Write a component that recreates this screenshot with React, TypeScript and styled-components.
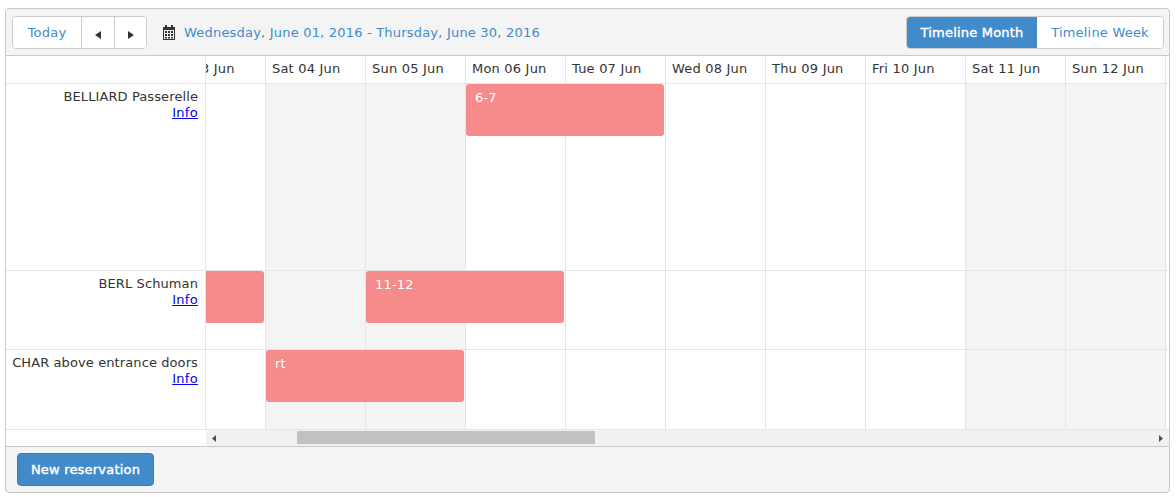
import React from 'react'
import styled, { createGlobalStyle } from 'styled-components'

const CELL_WIDTH = 100
const TRACK_START = -40 // the timeline is scrolled, so the first day is cut off on the left

interface Day {
  label: string
  weekend?: boolean
}

interface Reservation {
  title: string
  startDay: number
  days: number
}

interface Resource {
  name: string
  height: number
  reservations: Reservation[]
}

const days: Day[] = [
  { label: 'Fri 03 Jun' },
  { label: 'Sat 04 Jun', weekend: true },
  { label: 'Sun 05 Jun', weekend: true },
  { label: 'Mon 06 Jun' },
  { label: 'Tue 07 Jun' },
  { label: 'Wed 08 Jun' },
  { label: 'Thu 09 Jun' },
  { label: 'Fri 10 Jun' },
  { label: 'Sat 11 Jun', weekend: true },
  { label: 'Sun 12 Jun', weekend: true },
  { label: 'Mon 13 Jun' },
]

const resources: Resource[] = [
  { name: 'BELLIARD Passerelle', height: 187, reservations: [{ title: '6-7', startDay: 3, days: 2 }] },
  {
    name: 'BERL Schuman',
    height: 79,
    reservations: [
      { title: '', startDay: -1, days: 2 },
      { title: '11-12', startDay: 2, days: 2 },
    ],
  },
  { name: 'CHAR above entrance doors', height: 80, reservations: [{ title: 'rt', startDay: 1, days: 2 }] },
]

const GlobalStyle = createGlobalStyle`
  html, body {
    margin: 0;
    padding: 0;
    background: #fff;
  }
  body {
    font-family: "DejaVu Sans", Verdana, sans-serif;
    font-size: 13px;
    letter-spacing: 0.2px;
    color: #333;
  }
`

const Page = styled.div`
  padding: 8px 6px 0 5px;
`

const Scheduler = styled.div`
  border: 1px solid #c9c9c9;
  border-radius: 4px;
  background: #f4f4f4;
  overflow: hidden;
`

const Toolbar = styled.div`
  display: flex;
  align-items: center;
  justify-content: space-between;
  height: 46px;
  padding: 0 5px 0 6px;
  border-bottom: 1px solid #c9c9c9;
  box-sizing: content-box;
`

const ToolbarLeft = styled.div`
  display: flex;
  align-items: center;
`

const ButtonGroup = styled.div`
  display: flex;
  height: 33px;
  background: #fff;
  border: 1px solid #ccc;
  border-radius: 4px;
  box-sizing: border-box;
  overflow: hidden;
`

const ToolButton = styled.div<{ $width: number; $active?: boolean }>`
  display: flex;
  align-items: center;
  justify-content: center;
  box-sizing: border-box;
  width: ${(p) => p.$width}px;
  color: ${(p) => (p.$active ? '#fff' : '#428bca')};
  background: ${(p) => (p.$active ? '#428bca' : '#fff')};
  -webkit-text-stroke: ${(p) => (p.$active ? '0.4px' : '0')};
  border-left: 1px solid #ccc;
  &:first-child {
    border-left: none;
  }
`

const ArrowButton = styled(ToolButton)`
  padding-top: 5px;
`

const ViewButton = styled(ToolButton)`
  border-left: none;
`

const DateRange = styled.div`
  display: flex;
  align-items: center;
  margin-left: 16px;
  color: #428bca;
`

const CalendarIcon = styled.svg`
  width: 12px;
  height: 15px;
  margin-right: 9px;
  display: block;
`

const HeaderRow = styled.div`
  display: flex;
  height: 27px;
  background: #fff;
  border-bottom: 1px solid #e5e5e5;
`

const Corner = styled.div`
  flex: 0 0 200px;
  box-sizing: border-box;
  border-right: 1px solid #e5e5e5;
`

const TrackClip = styled.div`
  position: relative;
  flex: 1;
  min-width: 0;
  overflow: hidden;
`

const Track = styled.div`
  display: flex;
  height: 100%;
  margin-left: ${TRACK_START}px;
  width: max-content;
`

const HeadCell = styled.div`
  flex: 0 0 ${CELL_WIDTH}px;
  box-sizing: border-box;
  padding: 5px 0 0 6px;
  border-right: 1px solid #e5e5e5;
  white-space: nowrap;
`

const Row = styled.div<{ $height: number }>`
  display: flex;
  height: ${(p) => p.$height}px;
  background: #fff;
  border-bottom: 1px solid #e5e5e5;
  box-sizing: border-box;
`

const ResourceCell = styled.div`
  flex: 0 0 200px;
  box-sizing: border-box;
  padding: 5px 7px 0 0;
  border-right: 1px solid #e5e5e5;
  text-align: right;
  line-height: 16px;
  letter-spacing: 0.1px;
`

const InfoLink = styled.a`
  display: block;
  color: #0000ee;
  text-decoration: underline;
  letter-spacing: 0.3px;
`

const DayCell = styled.div<{ $weekend?: boolean }>`
  flex: 0 0 ${CELL_WIDTH}px;
  box-sizing: border-box;
  border-right: 1px solid #e5e5e5;
  background: ${(p) => (p.$weekend ? '#f4f4f4' : '#fff')};
`

const EventBar = styled.div<{ $start: number; $days: number }>`
  position: absolute;
  top: 0;
  left: ${(p) => TRACK_START + p.$start * CELL_WIDTH}px;
  width: ${(p) => p.$days * CELL_WIDTH - 2}px;
  height: 52px;
  box-sizing: border-box;
  padding: 5px 9px;
  background: #f68b8b;
  border-radius: 3px;
  color: #fff;
  line-height: 17px;
`

const ScrollRow = styled.div`
  display: flex;
  height: 16px;
  border-bottom: 1px solid #c9c9c9;
  box-sizing: content-box;
  background: #fff;
`

const ScrollCorner = styled.div`
  flex: 0 0 200px;
`

const ScrollBar = styled.div`
  flex: 1;
  display: flex;
  align-items: center;
  justify-content: space-between;
  padding: 0 6px;
  background: #f1f1f1;
  position: relative;
`

const ScrollThumb = styled.div`
  position: absolute;
  top: 1px;
  left: 91px;
  width: 298px;
  height: 13px;
  background: #c1c1c1;
`

const Arrow = styled.svg<{ $small?: boolean }>`
  display: block;
  width: ${(p) => (p.$small ? 4 : 6)}px;
  height: ${(p) => (p.$small ? 7 : 8)}px;
`

const Footer = styled.div`
  display: flex;
  align-items: center;
  height: 45px;
  padding-left: 11px;
`

const PrimaryButton = styled.div`
  display: flex;
  align-items: center;
  justify-content: center;
  width: 137px;
  height: 33px;
  box-sizing: border-box;
  background: #428bca;
  border: 1px solid #357ebd;
  border-radius: 4px;
  color: #fff;
  -webkit-text-stroke: 0.4px;
`

const NavArrow = ({ dir, color, small }: { dir: 'left' | 'right'; color: string; small?: boolean }) => (
  <Arrow viewBox="0 0 6 8" preserveAspectRatio="none" $small={small}>
    <path d={dir === 'left' ? 'M6 0V8L0 4Z' : 'M0 0V8L6 4Z'} fill={color} />
  </Arrow>
)

const App = () => {
  return (
    <Page>
      <GlobalStyle />
      <Scheduler>
        <Toolbar>
          <ToolbarLeft>
            <ButtonGroup>
              <ToolButton $width={68}>Today</ToolButton>
              <ArrowButton $width={33}>
                <NavArrow dir="left" color="#333" />
              </ArrowButton>
              <ArrowButton $width={32}>
                <NavArrow dir="right" color="#333" />
              </ArrowButton>
            </ButtonGroup>
            <DateRange>
              <CalendarIcon viewBox="0 0 12 15">
                <path d="M0 2h12v13H0z" fill="#333" />
                <path d="M2 0h2v3H2zM8 0h2v3H8z" fill="#333" />
                <path d="M1 5h10v9H1z" fill="#f4f4f4" />
                <path
                  d="M2 6h2v2H2zM5 6h2v2H5zM8 6h2v2H8zM2 9h2v2H2zM5 9h2v2H5zM8 9h2v2H8zM2 12h2v1.500H2zM5 12h2v1.500H5zM8 12h2v1.500H8z"
                  fill="#333"
                />
              </CalendarIcon>
              Wednesday, June 01, 2016 - Thursday, June 30, 2016
            </DateRange>
          </ToolbarLeft>
          <ButtonGroup>
            <ViewButton $width={130} $active>
              Timeline Month
            </ViewButton>
            <ViewButton $width={126}>Timeline Week</ViewButton>
          </ButtonGroup>
        </Toolbar>

        <HeaderRow>
          <Corner />
          <TrackClip>
            <Track>
              {days.map((day) => (
                <HeadCell key={day.label}>{day.label}</HeadCell>
              ))}
            </Track>
          </TrackClip>
        </HeaderRow>

        {resources.map((resource) => (
          <Row key={resource.name} $height={resource.height}>
            <ResourceCell>
              {resource.name}
              <InfoLink href="#">Info</InfoLink>
            </ResourceCell>
            <TrackClip>
              <Track>
                {days.map((day) => (
                  <DayCell key={day.label} $weekend={day.weekend} />
                ))}
              </Track>
              {resource.reservations.map((r) => (
                <EventBar key={r.startDay} $start={r.startDay} $days={r.days}>
                  {r.title}
                </EventBar>
              ))}
            </TrackClip>
          </Row>
        ))}

        <ScrollRow>
          <ScrollCorner />
          <ScrollBar>
            <NavArrow dir="left" color="#505050" small />
            <ScrollThumb />
            <NavArrow dir="right" color="#505050" small />
          </ScrollBar>
        </ScrollRow>

        <Footer>
          <PrimaryButton>New reservation</PrimaryButton>
        </Footer>
      </Scheduler>
    </Page>
  )
}

export default App
